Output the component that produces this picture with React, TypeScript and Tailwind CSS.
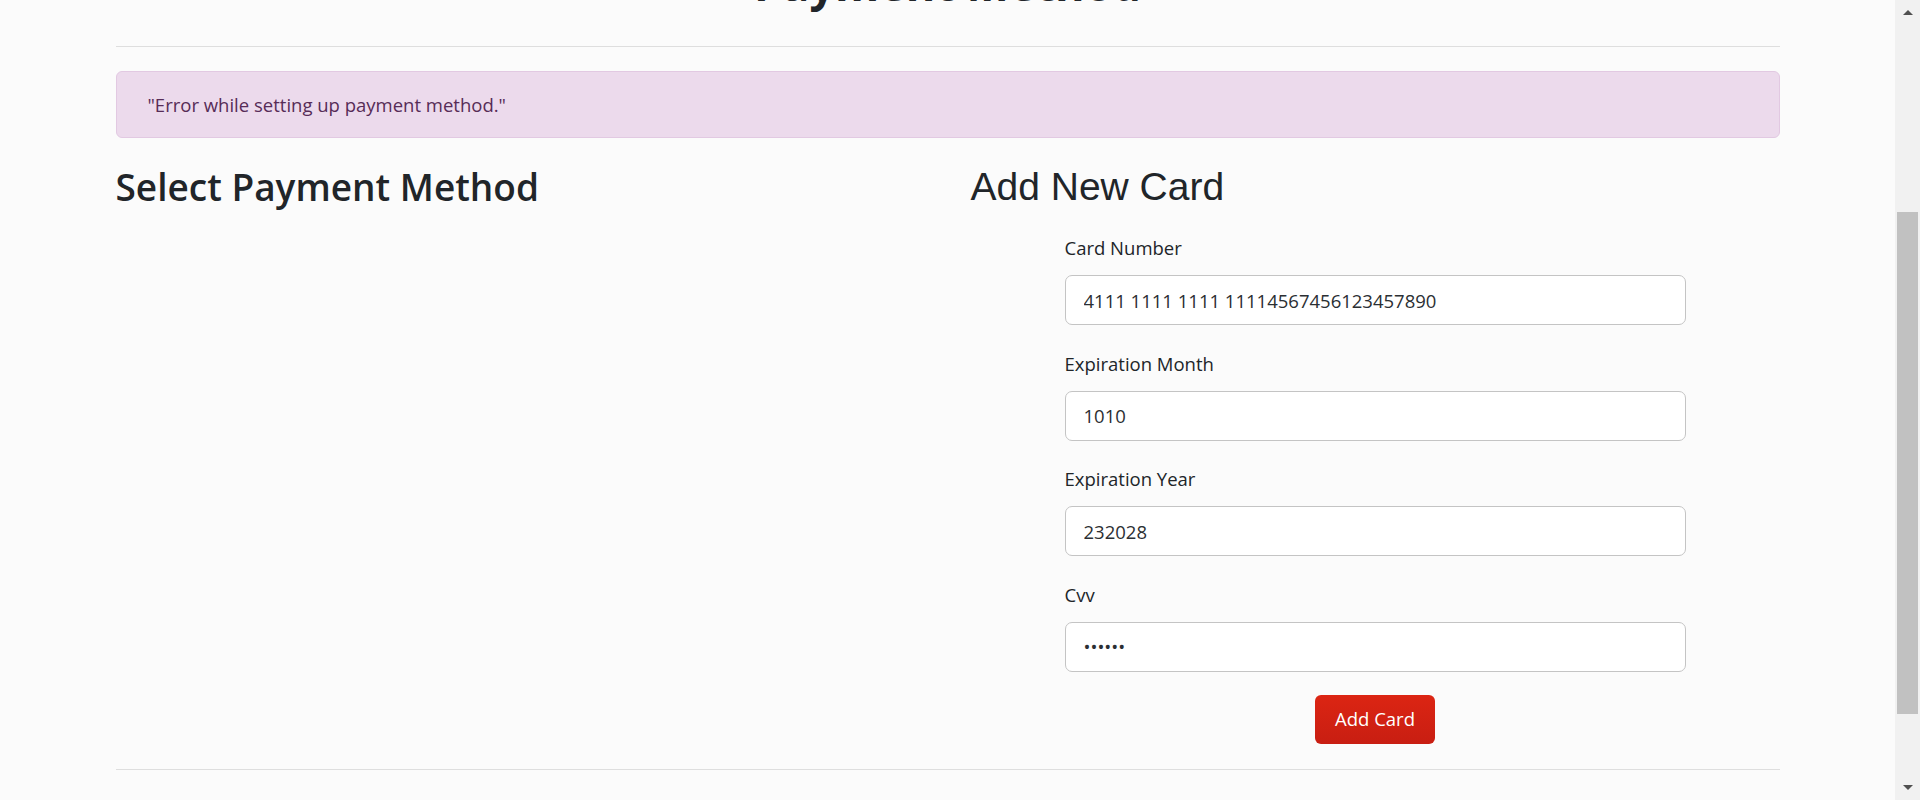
const fields = [
  { label: 'Card Number', value: '4111 1111 1111 11114567456123457890', type: 'text' },
  { label: 'Expiration Month', value: '1010', type: 'text' },
  { label: 'Expiration Year', value: '232028', type: 'text' },
  { label: 'Cvv', value: '123456', type: 'password' },
]

function Scrollbar() {
  return (
    <div className="flex h-[800px] w-[25px] flex-col bg-[#f1f1f1]">
      <div className="flex h-[25px] items-center justify-center">
        <div className="h-0 w-0 border-x-[5px] border-b-[5px] border-x-transparent border-b-[#505050]" />
      </div>
      <div className="flex-1 pl-[2px] pr-[2px]">
        <div className="mt-[187px] h-[502px] bg-[#c1c1c1]" />
      </div>
      <div className="flex h-[25px] items-center justify-center">
        <div className="h-0 w-0 border-x-[5px] border-t-[5px] border-x-transparent border-t-[#505050]" />
      </div>
    </div>
  )
}

export default function App() {
  return (
    <div className="flex h-[800px] overflow-hidden bg-[#fbfbfb] font-['Open_Sans',sans-serif] text-[#212529]">
      <main className="flex-1">
        <div className="mx-auto w-[1664px]">
          <div className="flex h-[46px] flex-col">
            <h1 className="-mt-[41px] text-center text-[45px] font-bold leading-[50px]">Payment Method</h1>
          </div>
          <hr className="border-t border-[#dedede]" />
          <div className="mt-[24px] flex h-[67px] items-center rounded-[6px] border border-[#e2c9e2] bg-[#ecdaec] px-[31px] text-[18.5px] text-[#572c57]">
            "Error while setting up payment method."
          </div>
          <div className="mt-[25px] grid grid-cols-[855px_1fr]">
            <h2 className="text-[37px] font-semibold leading-[47px]">Select Payment Method</h2>
            <div>
              <h2 className="font-['Liberation_Sans',Arial,sans-serif] text-[39px] leading-[47px]">Add New Card</h2>
              <form className="mx-auto mt-[25px] w-[621px]">
                <div className="flex flex-col gap-[25.5px]">
                  {fields.map((f) => (
                    <div key={f.label}>
                      <label className="mb-[14px] block text-[18.5px] leading-[26px]">{f.label}</label>
                      <input
                        type={f.type}
                        defaultValue={f.value}
                        readOnly
                        className="block h-[50px] w-full rounded-[7px] border border-[#c4c4c4] bg-white px-[18px] text-[18.5px] text-[#2b2f33] outline-none"
                      />
                    </div>
                  ))}
                </div>
                <button
                  type="button"
                  className="mx-auto mt-[23px] block h-[49px] w-[120px] rounded-[6px] bg-gradient-to-b from-[#dc2513] to-[#c81e12] text-[18.5px] text-white"
                >
                  Add Card
                </button>
              </form>
            </div>
          </div>
          <hr className="mt-[25px] border-t border-[#dedede]" />
        </div>
      </main>
      <Scrollbar />
    </div>
  )
}
